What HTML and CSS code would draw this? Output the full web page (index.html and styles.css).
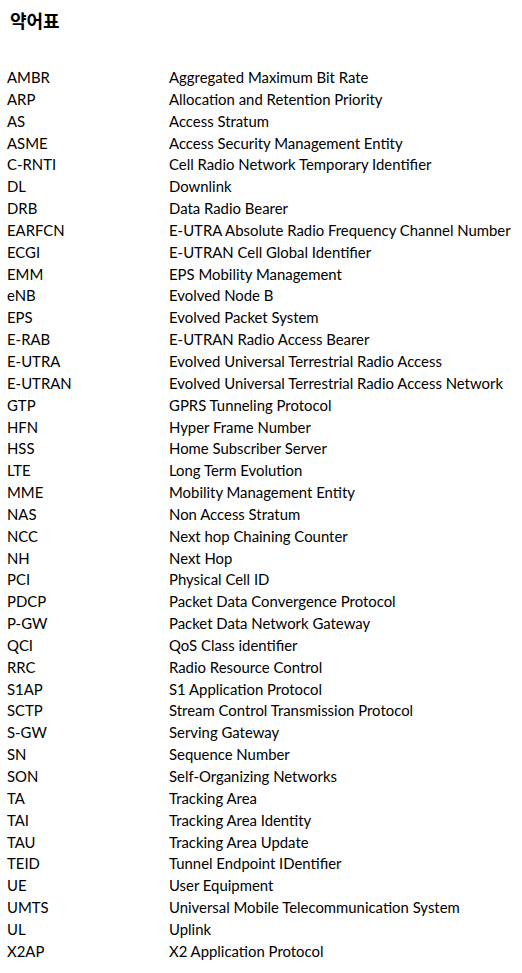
FILE: index.html
```html
<!DOCTYPE html>
<html lang="ko">
<head>
<meta charset="utf-8">
<link rel="stylesheet" href="styles.css">
</head>
<body>
<h1 class="title">약어표</h1>
<div class="list">
<div class="row"><span class="abbr">AMBR</span><span class="desc">Aggregated Maximum Bit Rate</span></div>
<div class="row"><span class="abbr">ARP</span><span class="desc">Allocation and Retention Priority</span></div>
<div class="row"><span class="abbr">AS</span><span class="desc">Access Stratum</span></div>
<div class="row"><span class="abbr">ASME</span><span class="desc">Access Security Management Entity</span></div>
<div class="row"><span class="abbr">C-RNTI</span><span class="desc">Cell Radio Network Temporary Identifier</span></div>
<div class="row"><span class="abbr">DL</span><span class="desc">Downlink</span></div>
<div class="row"><span class="abbr">DRB</span><span class="desc">Data Radio Bearer</span></div>
<div class="row"><span class="abbr">EARFCN</span><span class="desc">E-UTRA Absolute Radio Frequency Channel Number</span></div>
<div class="row"><span class="abbr">ECGI</span><span class="desc">E-UTRAN Cell Global Identifier</span></div>
<div class="row"><span class="abbr">EMM</span><span class="desc">EPS Mobility Management</span></div>
<div class="row"><span class="abbr">eNB</span><span class="desc">Evolved Node B</span></div>
<div class="row"><span class="abbr">EPS</span><span class="desc">Evolved Packet System</span></div>
<div class="row"><span class="abbr">E-RAB</span><span class="desc">E-UTRAN Radio Access Bearer</span></div>
<div class="row"><span class="abbr">E-UTRA</span><span class="desc">Evolved Universal Terrestrial Radio Access</span></div>
<div class="row"><span class="abbr">E-UTRAN</span><span class="desc">Evolved Universal Terrestrial Radio Access Network</span></div>
<div class="row"><span class="abbr">GTP</span><span class="desc">GPRS Tunneling Protocol</span></div>
<div class="row"><span class="abbr">HFN</span><span class="desc">Hyper Frame Number</span></div>
<div class="row"><span class="abbr">HSS</span><span class="desc">Home Subscriber Server</span></div>
<div class="row"><span class="abbr">LTE</span><span class="desc">Long Term Evolution</span></div>
<div class="row"><span class="abbr">MME</span><span class="desc">Mobility Management Entity</span></div>
<div class="row"><span class="abbr">NAS</span><span class="desc">Non Access Stratum</span></div>
<div class="row"><span class="abbr">NCC</span><span class="desc">Next hop Chaining Counter</span></div>
<div class="row"><span class="abbr">NH</span><span class="desc">Next Hop</span></div>
<div class="row"><span class="abbr">PCI</span><span class="desc">Physical Cell ID</span></div>
<div class="row"><span class="abbr">PDCP</span><span class="desc">Packet Data Convergence Protocol</span></div>
<div class="row"><span class="abbr">P-GW</span><span class="desc">Packet Data Network Gateway</span></div>
<div class="row"><span class="abbr">QCI</span><span class="desc">QoS Class identifier</span></div>
<div class="row"><span class="abbr">RRC</span><span class="desc">Radio Resource Control</span></div>
<div class="row"><span class="abbr">S1AP</span><span class="desc">S1 Application Protocol</span></div>
<div class="row"><span class="abbr">SCTP</span><span class="desc">Stream Control Transmission Protocol</span></div>
<div class="row"><span class="abbr">S-GW</span><span class="desc">Serving Gateway</span></div>
<div class="row"><span class="abbr">SN</span><span class="desc">Sequence Number</span></div>
<div class="row"><span class="abbr">SON</span><span class="desc">Self-Organizing Networks</span></div>
<div class="row"><span class="abbr">TA</span><span class="desc">Tracking Area</span></div>
<div class="row"><span class="abbr">TAI</span><span class="desc">Tracking Area Identity</span></div>
<div class="row"><span class="abbr">TAU</span><span class="desc">Tracking Area Update</span></div>
<div class="row"><span class="abbr">TEID</span><span class="desc">Tunnel Endpoint IDentifier</span></div>
<div class="row"><span class="abbr">UE</span><span class="desc">User Equipment</span></div>
<div class="row"><span class="abbr">UMTS</span><span class="desc">Universal Mobile Telecommunication System</span></div>
<div class="row"><span class="abbr">UL</span><span class="desc">Uplink</span></div>
<div class="row"><span class="abbr">X2AP</span><span class="desc">X2 Application Protocol</span></div>
</div>
</body>
</html>
```
FILE: styles.css
```css
html, body {
  margin: 0;
  padding: 0;
  background: #fff;
}
body {
  font-family: Lato, "Noto Sans CJK KR", sans-serif;
  color: #000;
}
.title {
  margin: 0;
  padding: 9px 0 0 10px;
  font-family: "Noto Sans CJK KR", sans-serif;
  font-size: 18px;
  font-weight: 700;
  line-height: 22px;
}
.list {
  padding: 36px 0 0 7px;
}
.row {
  display: grid;
  grid-template-columns: 162px 1fr;
  font-size: 14.9px;
  line-height: 21.85px;
  white-space: nowrap;
}
```
